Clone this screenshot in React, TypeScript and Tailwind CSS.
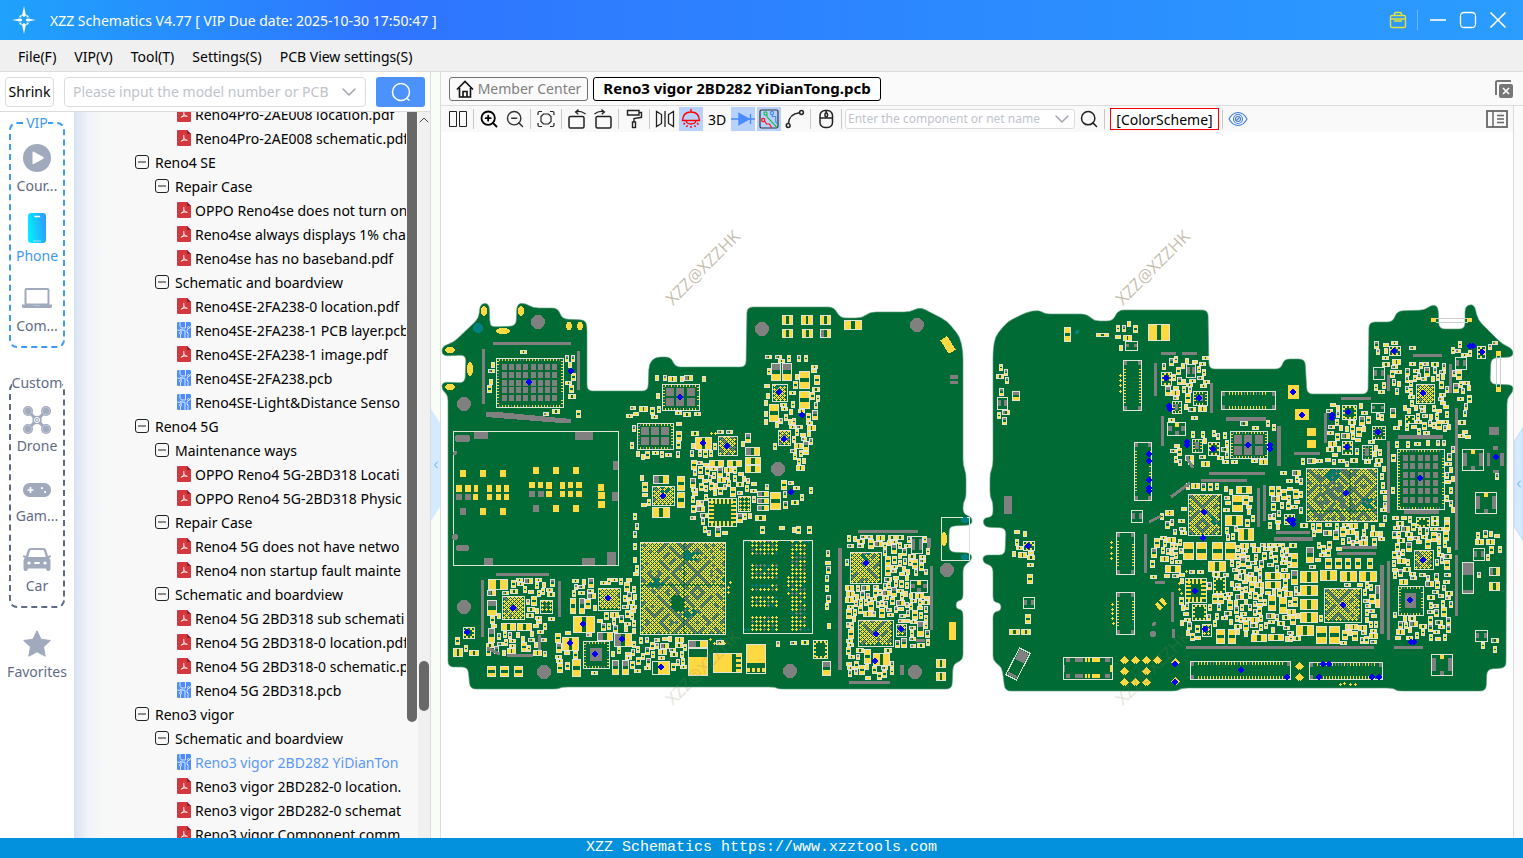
import React from "react";
import {
  ZoomIn,
  ZoomOut,
  Search,
  ChevronDown,
  ChevronUp,
  ChevronLeft,
} from "lucide-react";

/* ------------------------------------------------------------------ */
/* Board drawing                                                       */
/* ------------------------------------------------------------------ */

type Pt = [number, number];
type Box = [number, number, number, number];

function roundedPath(pts: Pt[], r: number): string {
  const n = pts.length;
  let d = "";
  for (let i = 0; i < n; i++) {
    const p0 = pts[(i + n - 1) % n];
    const p = pts[i];
    const p1 = pts[(i + 1) % n];
    const l0 = Math.hypot(p0[0] - p[0], p0[1] - p[1]);
    const l1 = Math.hypot(p1[0] - p[0], p1[1] - p[1]);
    const r0 = Math.min(r, l0 / 2);
    const r1 = Math.min(r, l1 / 2);
    const ax = p[0] + ((p0[0] - p[0]) * r0) / l0;
    const ay = p[1] + ((p0[1] - p[1]) * r0) / l0;
    const bx = p[0] + ((p1[0] - p[0]) * r1) / l1;
    const by = p[1] + ((p1[1] - p[1]) * r1) / l1;
    d += `${i === 0 ? "M" : "L"}${ax.toFixed(1)} ${ay.toFixed(1)}Q${p[0]} ${p[1]} ${bx.toFixed(1)} ${by.toFixed(1)}`;
  }
  return d + "Z";
}

const LEFT_OUTLINE: Pt[] = [
  [442, 346], [453, 343], [479, 318], [480, 304], [489, 303], [490, 325], [493, 327], [516, 326],
  [517, 304], [525, 303], [533, 308], [558, 308], [562, 319], [585, 320], [587, 326], [587, 391],
  [648, 391], [649, 364], [655, 357], [671, 357], [675, 367], [746, 367], [747, 307], [834, 307],
  [840, 318], [862, 318], [870, 312], [910, 312], [920, 307], [947, 321], [960, 337], [963, 353],
  [963, 465], [966, 473], [966, 498], [963, 503], [963, 514], [972, 517], [972, 525], [951, 526],
  [949, 530], [949, 552], [971, 553], [972, 560], [963, 566], [963, 600], [956, 601], [956, 609],
  [963, 610], [963, 660], [953, 664], [952, 689], [778, 689], [775, 687], [562, 687], [558, 689],
  [470, 689], [468, 667], [448, 667], [448, 395], [442, 390], [442, 382], [465, 383], [466, 355],
  [442, 356],
];

const RIGHT_OUTLINE: Pt[] = [
  [993, 352], [995, 337], [1007, 322], [1027, 312], [1039, 310], [1045, 314], [1087, 314],
  [1094, 321], [1113, 321], [1118, 310], [1208, 310], [1209, 369], [1281, 369], [1284, 359],
  [1305, 359], [1307, 394], [1368, 394], [1369, 322], [1393, 322], [1397, 311], [1425, 310],
  [1431, 305], [1438, 306], [1439, 329], [1465, 329], [1465, 306], [1474, 304], [1478, 320],
  [1502, 344], [1513, 349], [1513, 357], [1491, 358], [1490, 384], [1513, 385], [1513, 392],
  [1507, 398], [1506, 668], [1487, 669], [1486, 691], [1397, 691], [1393, 688], [1182, 688],
  [1177, 691], [1005, 691], [1002, 667], [993, 661], [993, 612], [1001, 611], [1001, 603],
  [993, 602], [993, 566], [983, 563], [983, 555], [1005, 555], [1006, 528], [984, 527],
  [983, 518], [993, 517], [993, 502], [990, 497], [990, 473], [993, 466],
];

const BARS: Box[] = [
  [493, 342, 78, 3], [482, 349, 3, 55], [577, 351, 3, 39], [496, 573, 53, 3], [481, 580, 3, 57],
  [558, 581, 3, 36], [507, 654, 26, 3], [538, 635, 3, 15], [858, 530, 60, 3], [927, 538, 4, 10],
  [930, 566, 3, 64], [838, 548, 4, 122], [849, 681, 41, 3], [916, 639, 9, 3], [900, 665, 4, 10],
  [950, 375, 8, 4], [950, 381, 8, 3], [1161, 352, 15, 3], [1182, 352, 15, 3], [1154, 363, 3, 33],
  [1210, 383, 3, 30], [1161, 416, 3, 30], [1226, 417, 40, 4], [1209, 472, 56, 3],
  [1201, 479, 46, 3], [1144, 534, 3, 39], [1171, 592, 3, 30], [1186, 646, 188, 3],
  [1257, 488, 3, 39], [1263, 485, 3, 36], [1277, 426, 4, 40], [1294, 452, 26, 3],
  [1324, 413, 3, 30], [1341, 397, 30, 3], [1387, 375, 3, 16], [1413, 354, 29, 3],
  [1449, 364, 3, 29], [1455, 408, 3, 142], [1455, 555, 3, 61], [1398, 435, 45, 4],
  [1387, 441, 3, 72], [1404, 510, 35, 4], [1342, 546, 35, 3], [1337, 552, 39, 3],
  [1276, 531, 34, 3], [1274, 537, 39, 4], [1380, 565, 4, 69], [1387, 561, 3, 79],
  [1394, 646, 29, 3], [1004, 496, 8, 18], [1155, 581, 10, 3], [1172, 629, 3, 9],
  [1489, 427, 10, 8], [1493, 446, 5, 4], [1487, 453, 3, 13], [1500, 453, 4, 13], [1493, 470, 6, 3],
  [474, 432, 14, 7], [575, 432, 18, 8], [613, 461, 5, 9], [612, 492, 6, 9], [484, 558, 9, 7],
  [582, 558, 13, 7], [607, 552, 9, 13], [456, 494, 6, 6], [465, 494, 6, 6], [460, 508, 6, 7],
  [529, 491, 6, 6], [538, 491, 6, 6], [533, 505, 6, 7],
];

const PADS: Box[] = [
  [460, 470, 6, 7], [480, 470, 6, 7], [500, 470, 6, 7], [533, 467, 6, 7], [553, 467, 6, 7],
  [573, 467, 6, 7], [456, 485, 6, 7], [465, 485, 6, 7], [474, 485, 4, 7], [487, 485, 5, 7],
  [496, 485, 5, 7], [504, 485, 5, 7], [473, 494, 5, 6], [487, 494, 5, 6], [496, 494, 5, 6],
  [504, 494, 5, 6], [529, 482, 6, 6], [538, 482, 5, 6], [546, 482, 6, 7], [560, 482, 5, 7],
  [568, 482, 5, 6], [576, 482, 6, 6], [546, 491, 6, 6], [560, 491, 5, 6], [568, 491, 5, 6],
  [576, 491, 6, 6], [480, 508, 6, 7], [500, 508, 6, 7], [553, 505, 6, 7], [573, 505, 6, 7],
  [598, 484, 6, 7], [598, 492, 7, 7], [598, 501, 7, 7], [949, 622, 7, 18], [1288, 385, 11, 14],
  [1295, 409, 14, 11], [1307, 428, 9, 8], [1307, 440, 9, 8],
];

/* x, y, w, h and G when the first pad is grey */
const PARTS: [number, number, number, number, string?][] = [
  [782, 315, 10, 9], [801, 315, 11, 9], [820, 315, 10, 9], [782, 329, 10, 8], [802, 329, 10, 8],
  [820, 329, 10, 8, "G"], [844, 320, 17, 9], [771, 363, 9, 17, "G"], [782, 363, 9, 17, "G"],
  [799, 371, 10, 17], [799, 391, 10, 17], [769, 404, 9, 17], [488, 579, 19, 10],
  [573, 616, 21, 16], [562, 637, 16, 13], [614, 633, 17, 13, "G"], [597, 632, 15, 8, "G"],
  [501, 623, 14, 7], [517, 623, 14, 7], [745, 447, 14, 8, "G"], [745, 457, 15, 7],
  [745, 465, 15, 7], [709, 460, 14, 6], [727, 460, 14, 6], [770, 492, 10, 17], [757, 491, 11, 5, "G"],
  [757, 498, 11, 5, "G"], [757, 505, 11, 5, "G"], [755, 515, 10, 5], [487, 666, 8, 10],
  [500, 666, 8, 10], [514, 666, 8, 10], [936, 659, 9, 8], [936, 672, 9, 8], [652, 507, 17, 10],
  [677, 476, 7, 14], [677, 492, 7, 15], [653, 475, 15, 8, "G"], [570, 598, 5, 15], [579, 598, 5, 15, "G"],
  [572, 659, 8, 17], [487, 600, 9, 15, "G"], [488, 628, 6, 14, "G"], [695, 437, 16, 12],
  [453, 648, 9, 8], [469, 650, 9, 5], [864, 649, 6, 14], [873, 653, 16, 12], [822, 661, 8, 14, "G"],
  [917, 621, 6, 15, "G"], [688, 640, 19, 8, "G"], [612, 660, 6, 14, "G"], [622, 660, 6, 14, "G"],
  [1148, 324, 21, 16], [1064, 327, 6, 14], [1096, 333, 12, 3], [1183, 542, 10, 17], [1196, 542, 10, 17],
  [1212, 542, 10, 17], [1225, 542, 10, 17], [1208, 561, 17, 10], [1165, 565, 15, 7],
  [1300, 571, 17, 11], [1300, 585, 17, 10], [1300, 599, 17, 10], [1300, 612, 17, 10],
  [1320, 570, 16, 10], [1340, 571, 16, 10], [1359, 571, 17, 10], [1296, 625, 17, 10],
  [1316, 626, 10, 17], [1329, 626, 10, 17], [1232, 495, 10, 16], [1225, 515, 17, 10], [1238, 528, 15, 12],
  [1236, 486, 15, 7], [1216, 629, 8, 14], [1228, 629, 7, 14], [1489, 567, 10, 8, "G"],
  [1489, 582, 10, 8], [1265, 572, 15, 7], [1265, 581, 15, 7], [1268, 595, 7, 15],
  [1279, 597, 7, 16], [1268, 634, 15, 6], [1251, 634, 15, 7], [1291, 553, 6, 14], [1291, 570, 6, 14, "G"],
  [1306, 547, 7, 15, "G"], [1325, 558, 6, 10], [1335, 558, 6, 10], [1345, 558, 5, 10],
  [1355, 558, 5, 10], [1367, 558, 5, 10], [1012, 391, 7, 9, "G"], [1009, 629, 10, 5], [1021, 629, 9, 5],
  [1269, 486, 5, 9], [1276, 486, 4, 9], [1281, 489, 5, 10], [1293, 489, 5, 9], [1375, 585, 4, 22, "G"],
];

/* BGA: x, y, w, h, dense, grey share */
const BGAS: [number, number, number, number, boolean, number][] = [
  [772, 384, 15, 17, true, 0.1], [718, 436, 19, 19, true, 0.4], [778, 430, 12, 15, true, 0.3],
  [652, 486, 22, 19, true, 0.2], [738, 496, 12, 15, false, 0.1], [640, 542, 85, 92, true, 0.36],
  [850, 552, 31, 31, true, 0.25], [858, 620, 35, 26, true, 0.2], [896, 624, 10, 12, true, 0.3],
  [502, 596, 22, 23, true, 0.2], [540, 600, 12, 13, false, 0.2], [598, 588, 22, 22, true, 0.2],
  [1306, 468, 71, 53, true, 0.55], [1188, 494, 33, 41, true, 0.35], [1324, 588, 37, 34, true, 0.4],
  [1414, 550, 19, 19, true, 0.3], [1416, 384, 18, 19, true, 0.3], [1202, 624, 9, 12, false, 0.2],
];

/* chips with thermal grid: x, y, w, h, cols, rows */
const GRIDS: [number, number, number, number, number, number][] = [
  [496, 358, 67, 49, 8, 5], [662, 384, 37, 26, 3, 2], [637, 423, 36, 26, 3, 2],
  [1230, 431, 37, 27, 3, 2], [1397, 449, 47, 60, 5, 6], [583, 641, 26, 27, 1, 1],
  [1398, 586, 25, 29, 1, 1], [1193, 391, 14, 14, 1, 1], [1372, 426, 13, 13, 1, 1],
  [1362, 445, 10, 14, 1, 1], [1192, 439, 10, 13, 1, 1], [1172, 401, 9, 12, 1, 1],
];

const QFNS: Box[] = [
  [708, 498, 28, 28], [463, 627, 11, 11], [813, 640, 14, 18], [1185, 578, 21, 24],
  [1161, 372, 10, 13], [1208, 442, 11, 13], [1342, 405, 14, 14], [1342, 441, 10, 13],
  [1213, 577, 12, 16], [1192, 604, 14, 16], [1389, 346, 11, 9], [1477, 346, 8, 12],
  [1023, 541, 11, 9], [1284, 514, 10, 10], [1405, 415, 9, 8], [1416, 517, 13, 10],
];

const CONNECTORS: [number, number, number, number, boolean][] = [
  [1123, 360, 18, 50, true], [1134, 442, 17, 58, true], [1116, 532, 18, 42, true],
  [1116, 592, 18, 42, true], [1221, 391, 54, 18, false], [1190, 661, 100, 18, false],
  [1309, 662, 73, 17, false],
];

const CORNER_BOXES: Box[] = [
  [1462, 449, 21, 21], [1475, 492, 21, 21], [1431, 654, 21, 21], [1131, 510, 11, 12],
  [1023, 597, 11, 11], [997, 397, 10, 12], [1125, 341, 12, 9], [1167, 422, 18, 13],
  [1373, 367, 11, 12], [1455, 357, 11, 12], [1473, 548, 11, 12], [1475, 630, 12, 11],
  [1371, 403, 13, 9], [1186, 364, 9, 13], [910, 580, 17, 12], [911, 536, 11, 17],
];

/* dense areas of small passives: x, y, w, h, density */
const CLUSTERS: [number, number, number, number, number][] = [
  [764, 355, 48, 8, 0.9], [764, 364, 55, 60, 0.45], [773, 422, 42, 30, 0.6], [793, 446, 16, 27, 0.5],
  [487, 360, 8, 35, 0.7], [565, 354, 10, 48, 0.5], [498, 350, 66, 4, 0.3], [540, 409, 40, 8, 0.2],
  [655, 375, 52, 7, 0.8], [625, 406, 78, 12, 0.5], [630, 425, 5, 32, 0.8], [634, 451, 46, 8, 0.7],
  [676, 420, 5, 32, 0.7], [655, 383, 5, 27, 0.8], [690, 430, 60, 28, 0.6], [690, 460, 60, 36, 0.8],
  [700, 490, 12, 45, 0.8], [736, 482, 22, 40, 0.6], [690, 496, 16, 24, 0.9], [640, 475, 12, 35, 0.6],
  [757, 480, 55, 30, 0.15], [700, 526, 30, 12, 0.7], [756, 526, 55, 7, 0.4], [486, 578, 60, 78, 0.7],
  [546, 578, 10, 42, 0.6], [570, 578, 66, 62, 0.8], [553, 630, 82, 44, 0.4], [628, 637, 60, 38, 0.5],
  [825, 548, 5, 86, 1], [633, 513, 5, 90, 1], [845, 535, 84, 112, 1], [845, 647, 50, 32, 0.6],
  [640, 636, 45, 12, 0.4], [707, 640, 60, 5, 0.3], [773, 640, 38, 7, 0.3], [453, 625, 24, 34, 0.2],
  [1161, 356, 48, 32, 0.5], [1165, 380, 45, 34, 0.6], [1166, 416, 32, 8, 0.7], [1170, 430, 68, 36, 0.4],
  [996, 358, 14, 66, 0.4], [1012, 525, 14, 32, 0.5], [1026, 550, 8, 40, 0.4], [1024, 610, 6, 18, 0.5],
  [1113, 320, 26, 32, 0.3], [1150, 536, 34, 42, 0.5], [1178, 500, 8, 130, 0.5], [1160, 510, 24, 30, 0.3],
  [1222, 485, 32, 55, 0.7], [1182, 570, 50, 70, 0.6], [1230, 543, 70, 98, 0.9], [1280, 470, 22, 50, 0.4],
  [1268, 486, 34, 46, 0.5], [1296, 458, 88, 8, 0.7], [1303, 541, 34, 28, 0.5], [1300, 523, 84, 22, 0.7],
  [1320, 546, 60, 10, 0.4], [1340, 582, 38, 62, 0.8], [1318, 584, 62, 60, 0.7], [1326, 403, 60, 58, 0.5],
  [1373, 340, 30, 55, 0.35], [1403, 346, 14, 6, 0.6], [1405, 362, 43, 75, 0.75], [1390, 405, 60, 26, 0.3],
  [1395, 440, 55, 9, 0.9], [1445, 446, 9, 70, 0.8], [1380, 464, 6, 62, 1], [1390, 445, 5, 48, 0.5],
  [1392, 516, 60, 60, 0.7], [1392, 572, 60, 70, 0.55], [1450, 340, 14, 55, 0.4], [1458, 340, 40, 20, 0.35],
  [1457, 378, 14, 74, 0.35], [1475, 530, 26, 30, 0.3], [1477, 565, 6, 28, 0.6], [1480, 630, 18, 24, 0.4],
  [1235, 420, 40, 10, 0.6], [1230, 458, 40, 8, 0.5], [1490, 453, 10, 35, 0.3], [1181, 483, 70, 8, 0.6],
];

const BLUE: Pt[] = [
  [529, 382], [571, 371], [680, 397], [779, 392], [802, 415], [784, 439], [727, 446], [703, 443],
  [663, 496], [791, 492], [467, 632], [513, 608], [608, 598], [583, 624], [570, 643], [622, 639],
  [595, 654], [661, 667], [866, 563], [876, 634], [901, 629], [875, 661], [1166, 378], [1199, 398],
  [1169, 406], [1170, 409], [1187, 442], [1187, 445], [1213, 449], [1149, 454], [1149, 461],
  [1149, 480], [1149, 488], [1149, 491], [1248, 445], [1270, 445], [1270, 449], [1204, 512],
  [1203, 538], [1195, 591], [1205, 629], [1028, 546], [1241, 670], [1175, 664], [1175, 682],
  [1293, 392], [1302, 415], [1332, 415], [1332, 418], [1348, 412], [1378, 432], [1347, 447],
  [1346, 493], [1289, 520], [1293, 520], [1293, 524], [1423, 393], [1394, 351], [1420, 478],
  [1423, 560], [1410, 600], [1343, 605], [1482, 352], [1470, 346], [1473, 346], [1496, 457],
  [1411, 642], [1414, 642], [1319, 677], [1372, 677], [1379, 677], [1287, 677], [1323, 664],
  [1329, 664],
];

const HOLES: Pt[] = [
  [538, 322], [464, 404], [762, 329], [917, 325], [778, 469], [464, 607], [544, 672], [790, 671],
  [915, 672], [947, 570],
];

const STARS: Pt[] = [
  [1124, 660], [1135, 660], [1146, 660], [1157, 660], [1124, 671], [1146, 671], [1124, 682],
  [1135, 682], [1146, 682], [1175, 662], [1175, 681], [1299, 666], [1299, 677],
];

const OVALS: [number, number, number, number][] = [
  [484, 311, 3, 5], [521, 311, 3, 5], [503, 331, 7, 3], [569, 326, 3, 4], [580, 326, 3, 4],
  [450, 350, 5, 3], [470, 369, 3, 7], [450, 387, 5, 3], [944, 539, 3, 7],
];

function buildBoard() {
  let seed = 20282;
  const rnd = () => {
    seed = (seed * 1664525 + 1013904223) % 4294967296;
    return seed / 4294967296;
  };
  const X0 = 440;
  const Y0 = 290;
  const W = 1080;
  const H = 410;
  const used = new Uint8Array(W * H);
  const mark = (x: number, y: number, w: number, h: number) => {
    for (let j = y; j < y + h; j++)
      for (let i = x; i < x + w; i++) used[(j - Y0) * W + (i - X0)] = 1;
  };
  const free = (x: number, y: number, w: number, h: number) => {
    for (let j = y; j < y + h; j++)
      for (let i = x; i < x + w; i++) if (used[(j - Y0) * W + (i - X0)]) return false;
    return true;
  };
  const out = { y: "", g: "", t: "", line: "" };
  const rect = (k: "y" | "g" | "t", x: number, y: number, w: number, h: number) => {
    out[k] += `M${x} ${y}h${w}v${h}h${-w}z`;
  };
  const frame = (x: number, y: number, w: number, h: number) => {
    out.line += `M${x + 0.5} ${y + 0.5}h${w}v${h}h${-w}z`;
  };
  const part = (x: number, y: number, w: number, h: number, first: "y" | "g", second: "y" | "g") => {
    frame(x, y, w, h);
    if (w >= h) {
      const p = Math.max(1, Math.round((w - 1) * 0.38));
      rect(first, x + 1, y + 1, p, h - 1);
      rect(second, x + w - p, y + 1, p, h - 1);
    } else {
      const p = Math.max(1, Math.round((h - 1) * 0.38));
      rect(first, x + 1, y + 1, w - 1, p);
      rect(second, x + 1, y + h - p, w - 1, p);
    }
  };
  const plus = (k: "y" | "g" | "t", x: number, y: number) => {
    out[k] += `M${x} ${y + 1}h3v1h-3zM${x + 1} ${y}h1v3h-1z`;
  };

  BARS.forEach(([x, y, w, h]) => {
    rect("g", x, y, w, h);
    mark(x, y, w, h);
  });
  PADS.forEach(([x, y, w, h]) => {
    rect("y", x, y, w, h);
    mark(x, y, w, h);
  });
  BLUE.forEach(([x, y]) => mark(x - 2, y - 2, 4, 4));
  HOLES.forEach(([x, y]) => mark(x - 7, y - 7, 14, 14));

  frame(453, 431, 165, 134);
  mark(453, 431, 166, 135);

  /* power inductors and shields */
  [[688, 647, 19, 28], [746, 644, 19, 29], [713, 653, 28, 20], [652, 661, 17, 13]].forEach(
    ([x, y, w, h]) => mark(x, y, w, h),
  );
  frame(688, 647, 19, 28);
  rect("y", 689, 657, 18, 18);
  frame(746, 644, 19, 29);
  rect("y", 747, 645, 18, 18);
  [0, 5, 10, 15].forEach((o) => rect("y", 747 + o, 668, 3, 4));
  rect("y", 713, 654, 19, 19);
  frame(713, 653, 28, 19);
  [0, 5, 10, 15].forEach((o) => rect("y", 736, 654 + o, 5, 3));
  rect("y", 658, 661, 11, 13);
  frame(652, 661, 17, 13);

  GRIDS.forEach(([x, y, w, h, c, r]) => {
    mark(x - 1, y - 1, w + 2, h + 2);
    frame(x, y, w, h);
    const m = c === 1 ? Math.floor(w / 4) : w > 40 ? 5 : 3;
    const cw = (w - 2 * m) / c;
    const ch = (h - 2 * m) / r;
    for (let i = 0; i < c; i++)
      for (let j = 0; j < r; j++)
        rect("g", Math.round(x + m + i * cw) + 1, Math.round(y + m + j * ch) + 1,
          Math.max(3, Math.round(cw) - 2), Math.max(3, Math.round(ch) - 2));
    for (let i = 3; i < w - 2; i += 3) {
      rect(rnd() < 0.7 ? "y" : "g", x + i, y + 1, 1, 2);
      rect(rnd() < 0.7 ? "y" : "g", x + i, y + h - 2, 1, 2);
    }
    for (let j = 3; j < h - 2; j += 3) {
      rect(rnd() < 0.7 ? "y" : "g", x + 1, y + j, 2, 1);
      rect(rnd() < 0.8 ? "y" : "t", x + w - 2, y + j, 2, 1);
    }
  });

  QFNS.forEach(([x, y, w, h]) => {
    mark(x, y, w + 1, h + 1);
    frame(x, y, w, h);
    const p = w > 20 ? 5 : 2;
    for (let i = 3; i < w - 2; i += 4) {
      rect("y", x + i, y + 1, 2, p);
      rect("y", x + i, y + h - p, 2, p);
    }
    for (let j = 3; j < h - 2; j += 4) {
      rect("y", x + 1, y + j, p, 2);
      rect("y", x + w - p, y + j, p, 2);
    }
  });

  CONNECTORS.forEach(([x, y, w, h, vertical]) => {
    mark(x, y, w + 1, h + 1);
    frame(x, y, w, h);
    [[x + 1, y + 1], [x + w - 3, y + 1], [x + 1, y + h - 4], [x + w - 3, y + h - 4]].forEach(
      ([a, b]) => rect("g", a, b, 3, 4),
    );
    if (vertical) {
      for (let j = 9; j < h - 7; j += 3) {
        rect("y", x + 1, y + j, 2, 1);
        rect(rnd() < 0.8 ? "y" : "t", x + w - 2, y + j, 2, 1);
      }
    } else {
      for (let i = 8; i < w - 7; i += 3) {
        rect(rnd() < 0.7 ? "y" : "g", x + i, y + 1, 1, 3);
        rect("y", x + i, y + h - 3, 1, 3);
      }
    }
  });

  CORNER_BOXES.forEach(([x, y, w, h]) => {
    mark(x, y, w + 1, h + 1);
    frame(x, y, w, h);
    const s = w > 15 ? 4 : 3;
    if (w > 15) {
      rect("g", x + 1, y + 4, 4, h - 8);
      rect("g", x + w - 4, y + 4, 4, h - 8);
      rect("y", x + Math.floor(w / 2) - 1, y + 1, 4, 4);
      rect("g", x + Math.floor(w / 2) - 1, y + h - 4, 4, 4);
    } else {
      rect("g", x + 1, y + 3, s, h - 6);
      rect("g", x + w - s, y + 3, s, h - 6);
    }
  });
  frame(1462, 562, 11, 31);
  rect("g", 1462, 563, 11, 12);
  rect("g", 1463, 590, 10, 3);
  mark(1461, 561, 14, 34);
  frame(1063, 657, 49, 22);
  mark(1063, 657, 50, 23);
  [[1066, 658, 4, 4, 0], [1075, 658, 8, 4, 0], [1085, 658, 2, 4, 1], [1088, 658, 2, 4, 1],
    [1092, 658, 8, 4, 1], [1105, 658, 5, 4, 0], [1066, 674, 4, 4, 0], [1075, 674, 8, 4, 0],
    [1085, 674, 2, 4, 1], [1088, 674, 2, 4, 1], [1092, 674, 8, 4, 1], [1105, 674, 5, 4, 0],
    [1063, 665, 2, 7, 0], [1110, 665, 2, 7, 1]].forEach(([x, y, w, h, k]) =>
    rect(k ? "y" : "g", x, y, w, h));

  PARTS.forEach(([x, y, w, h, k]) => {
    mark(x, y, w + 1, h + 1);
    part(x, y, w, h, k ? "g" : "y", "y");
  });

  BGAS.forEach(([x, y, w, h, dense, grey], n) => {
    mark(x - 1, y - 1, w + 3, h + 3);
    frame(x, y, w, h);
    const big = w > 60;
    const step = dense ? 2 : 4;
    let row = 0;
    for (let j = 0; j + 3 <= h; j += step, row++)
      for (let i = dense && row % 2 ? 3 : 1; i + 3 <= w; i += 4) {
        if (w > 80 && Math.hypot(i - 36, (j - 59) * 0.8) < 7) continue;
        const band = Math.floor(i / 14) + Math.floor(j / 16);
        const stripe = band % 2 ? (i + j) % 12 < 5 : (i - j + 96) % 12 < 5;
        const v = (stripe ? 0.45 : -0.1) + Math.sin(i * 0.07 + n) * 0.2 + rnd() * 0.5;
        const teal = Math.sin(i * 0.09 + n * 3 + 1) * Math.cos(j * 0.11 + n);
        const k =
          (big ? teal > 0.8 : teal > 0.9) && rnd() < 0.7
            ? "t"
            : v > 0.95 - grey * (big ? 1.1 : 0.9)
              ? "g"
              : "y";
        plus(k, x + Math.round(i * 1.012), y + Math.round(j * 1.012));
      }
  });

  /* memory footprint with separate ball fields */
  frame(743, 540, 69, 93);
  mark(743, 540, 71, 95);
  for (let j = 0; j < 23; j++)
    for (let i = 0; i < 17; i++) {
      const left = i >= 2 && i <= 8;
      const right = i >= 12 && i <= 15;
      const gapRow = (j >= 4 && j <= 5) || j === 10 || j === 13 || (j >= 17 && j <= 18);
      const corner = (i < 2 || i > 14) && (j < 1 || j > 21);
      if ((left && !gapRow) || right || (i === 11 && j > 8 && j < 14) || corner) {
        const k = corner || (j === 11 && i < 7) ? "t" : rnd() < 0.22 ? "g" : rnd() < 0.1 ? "t" : "y";
        plus(k, 743 + i * 4, 540 + j * 4);
      }
    }

  /* loose test points */
  [[1119, 374], [1119, 379], [1119, 384], [1119, 390], [1110, 541], [1110, 546], [1110, 552],
    [1110, 557], [1111, 603], [1111, 608], [1111, 612], [1111, 617], [1112, 622], [709, 638],
    [713, 642], [718, 642], [723, 642], [705, 642], [729, 581], [727, 586], [727, 591],
    [1339, 683], [1343, 682], [1349, 683], [1354, 683], [1169, 512], [1178, 582], [1178, 588],
    [1180, 592], [1185, 570], [710, 432], [714, 432], [709, 488], [714, 488]].forEach(([x, y]) =>
    plus("y", x, y));
  plus("t", 719, 638);

  const sizes: Pt[] = [
    [6, 3], [3, 6], [5, 3], [3, 5], [7, 4], [4, 7], [8, 5], [5, 9], [6, 3], [3, 6],
  ];
  CLUSTERS.forEach(([cx, cy, cw, ch, density]) => {
    for (let y = cy; y < cy + ch; y++)
      for (let x = cx; x < cx + cw; x++) {
        if (rnd() > 0.09 * density + 0.14 * density * density) continue;
        const [w, h] = sizes[Math.floor(rnd() * sizes.length)];
        if (x + w > cx + cw || y + h > cy + ch || !free(x, y, w + 1, h + 1)) continue;
        mark(x, y, w + 1, h + 1);
        part(x, y, w, h, rnd() < 0.3 ? "g" : "y", "y");
      }
  });
  return out;
}

const BOARD = buildBoard();
const LEFT_PATH = roundedPath(LEFT_OUTLINE, 6);
const RIGHT_PATH = roundedPath(RIGHT_OUTLINE, 6);

function Watermark({ x, y }: { x: number; y: number }) {
  return (
    <text
      transform={`translate(${x} ${y}) rotate(-45)`}
      fontSize="17"
      fill="#8a7d5a"
      fillOpacity="0.5"
      fontFamily="'Open Sans', sans-serif"
    >
      XZZ@XZZHK
    </text>
  );
}

function BoardView() {
  return (
    <svg
      viewBox="441 132 1072 706"
      className="block h-full w-full"
      role="img"
      aria-label="Board view"
    >
      <g fill="#006b35" stroke="#5d9c7c" strokeWidth="0.6">
        <path d={LEFT_PATH} />
        <path d={RIGHT_PATH} />
      </g>
      <g shapeRendering="crispEdges">
        <path d={BOARD.g} fill="#808080" />
        <path d={BOARD.y} fill="#ffd942" />
        <path d={BOARD.t} fill="#008080" />
        <path d={BOARD.line} fill="none" stroke="#dfe3d8" strokeWidth="1" />
        <path d="M486 412l12 0 73 7v4l-10 0-63-5-12-1z" fill="#808080" />
        <path d="M1171 497l19-14M1149 522l12-6M1187 458l6 10M487 648l13 6" stroke="#808080" strokeWidth="3" />
        <rect x="-4" y="-8" width="8" height="16" transform="translate(948 345) rotate(-32)" fill="#ffd942" />
        <g transform="translate(1018 664) rotate(27)">
          <rect x="-6" y="-15" width="12" height="30" fill="none" stroke="#dfe3d8" />
          <rect x="-5" y="-14" width="10" height="11" fill="#808080" />
          <rect x="-5" y="11" width="10" height="3" fill="#808080" />
        </g>
        <g transform="translate(1161 604) rotate(-42)">
          <rect x="-5" y="-4" width="4" height="8" fill="#ffd942" />
          <rect x="1" y="-4" width="4" height="8" fill="#ffd942" />
        </g>
        <path d="M941.500 517.500h28v43h-28z" fill="none" stroke="#dfe3d8" />
        <path d="M1436 318.500h32M1436 322.500h32M1496.500 356v34M1500.500 356v34" stroke="#cfcfcf" />
        <path d="M1431 318h5v4h-5zM1467 318h5v4h-5zM1496 351h5v5h-5zM1496 387h5v5h-5z" fill="#ffd942" />
        {HOLES.map(([x, y]) => (
          <circle key={`${x}-${y}`} cx={x} cy={y} r="7" fill="#808080" />
        ))}
        <circle cx="1153" cy="634" r="3" fill="#808080" />
        <circle cx="1154" cy="624" r="2" fill="#808080" />
        <rect x="455" y="435" width="15" height="7" rx="3" fill="#808080" />
        <rect x="456" y="545" width="13" height="6" rx="3" fill="#808080" />
        <circle cx="455" cy="453" r="2" fill="#808080" />
        <circle cx="455" cy="537" r="3" fill="#808080" />
        <circle cx="478" cy="328" r="5" fill="#008080" />
        <circle cx="1077" cy="332" r="2" fill="#008080" />
        <ellipse cx="965" cy="520" rx="4" ry="3" fill="#008080" />
        <ellipse cx="965" cy="557" rx="4" ry="3" fill="#008080" />
        {OVALS.map(([x, y, rx, ry]) => (
          <ellipse key={`${x}-${y}`} cx={x} cy={y} rx={rx} ry={ry} fill="#ffd942" />
        ))}
        {STARS.map(([x, y]) => (
          <path
            key={`${x}-${y}`}
            d={`M${x - 4} ${y}h1v-1h1v-1h1v-1h1v-1h1v1h1v1h1v1h1v1h1v1h-1v1h-1v1h-1v1h-1v-1h-1v1h-1v-1h-1v-1h-1v-1h-1z`}
            fill="#ffd942"
          />
        ))}
        {BLUE.map(([x, y]) => (
          <circle key={`${x}-${y}`} cx={x} cy={y} r="2.600" fill="#0000f5" />
        ))}
      </g>
      <Watermark x={673} y={306} />
      <Watermark x={1123} y={306} />
      <g opacity="0.5">
        <Watermark x={673} y={706} />
        <Watermark x={1123} y={706} />
      </g>
    </svg>
  );
}

/* ------------------------------------------------------------------ */
/* Icons                                                               */
/* ------------------------------------------------------------------ */

function Logo() {
  return (
    <svg viewBox="0 0 24 28" className="h-7 w-6" fill="#fff" aria-hidden="true">
      <path d="M12 0l1.900 9.500L12 11l-1.900-1.500zM12 28l1.900-9.500L12 17l-1.900 1.500zM0 14l9-1.600L10.500 14 9 15.600zM24 14l-9-1.600L13.500 14l1.500 1.600z" />
      <path d="M7 10l3-1-1 3zM17 10l-3-1 1 3zM7 18l3 1-1-3zM17 18l-3 1 1-3z" opacity=".85" />
      <circle cx="12" cy="14" r="5.500" fill="none" stroke="#fff" strokeWidth=".7" opacity=".6" />
    </svg>
  );
}

function PdfIcon() {
  return (
    <svg viewBox="0 0 14 16" className="h-4 w-[14px] shrink-0" aria-hidden="true">
      <path d="M1.200 0H10l4 4v10.800a1.200 1.200 0 0 1-1.200 1.200H1.200A1.200 1.200 0 0 1 0 14.800V1.200A1.200 1.200 0 0 1 1.200 0z" fill="#d4373e" />
      <path d="M10 0l4 4h-3.200a.8.8 0 0 1-.8-.8z" fill="#8f1a20" />
      <path d="M6.800 5.200v2.600M6.900 7.800c0 1.500-1.200 3-2.600 3.500M7 8.300c.4 1.200 1.600 1.900 3.300 2M5 10.600c1.200-.5 2.700-.8 4-.7" fill="none" stroke="#fff" strokeWidth=".9" strokeLinecap="round" />
    </svg>
  );
}

function PcbIcon() {
  return (
    <svg viewBox="0 0 14 16" className="h-4 w-[14px] shrink-0" aria-hidden="true">
      <rect width="14" height="16" rx="1.200" fill="#4c8dfb" />
      <g fill="none" stroke="#fff" strokeWidth=".8">
        <path d="M3 0v4.500l2 1.500h3.500V0M2.800 8.200L.5 8.200M5.300 8.200h2.700v7.800M3.500 12.200V16M11 16v-5.500h-1V8l1.200-1.500M12.300 5.500L14 4.500" />
        <circle cx="4.100" cy="8.200" r="1.100" />
        <circle cx="11.600" cy="5.600" r="1" />
        <circle cx="3.500" cy="11.200" r="1" />
      </g>
    </svg>
  );
}

function BoxMinus() {
  return (
    <svg viewBox="0 0 14 14" className="h-[14px] w-[14px] shrink-0" fill="none" stroke="#222" aria-hidden="true">
      <rect x=".5" y=".5" width="13" height="13" rx="2.500" />
      <path d="M3 7h8" />
    </svg>
  );
}

const GREY = "#a1a9bd";

function CourseIcon() {
  return (
    <svg viewBox="0 0 28 28" className="h-7 w-7" aria-hidden="true">
      <circle cx="14" cy="14" r="14" fill={GREY} />
      <path d="M9.500 8.500q0-1.400 1.300-.8l9.500 5.400q1.100.9 0 1.700l-9.500 5.300q-1.300.5-1.300-.9z" fill="#fff" />
    </svg>
  );
}
function PhoneIcon() {
  return (
    <svg viewBox="0 0 18 30" className="h-[30px] w-[18px]" aria-hidden="true">
      <defs>
        <linearGradient id="phone" x1="0" y1="0.600" x2="1" y2="0.400">
          <stop offset="0" stopColor="#00f0ff" />
          <stop offset="1" stopColor="#2e9bff" />
        </linearGradient>
      </defs>
      <rect width="18" height="30" rx="3" fill="url(#phone)" />
      <path d="M7 3.500h4.500" stroke="#fff" strokeWidth="1.500" strokeLinecap="round" />
      <path d="M5 28h8" stroke="#9fe4ff" strokeWidth="1" />
    </svg>
  );
}
function LaptopIcon() {
  return (
    <svg viewBox="0 0 30 20" className="h-5 w-[30px]" aria-hidden="true">
      <rect x="3.500" y="1" width="23" height="15.500" rx="1" fill="none" stroke={GREY} strokeWidth="2" />
      <path d="M0 16.500h11q0 1 1 1h6q1 0 1-1h11v2q0 1.500-2 1.500H2q-2 0-2-1.500z" fill={GREY} />
    </svg>
  );
}
function DroneIcon() {
  return (
    <svg viewBox="0 0 28 28" className="h-7 w-7" aria-hidden="true">
      <path d="M5 5l6 6q3 1 6 0l6-6M5 23l6-6q3-1 6 0l6 6" stroke={GREY} strokeWidth="3" fill="none" />
      {[[5, 5], [23, 5], [5, 23], [23, 23]].map(([x, y]) => (
        <g key={`${x}-${y}`}>
          <circle cx={x} cy={y} r="5" fill={GREY} />
          <circle cx={x} cy={y} r="3.700" fill="none" stroke="#c9cedb" strokeWidth=".7" />
        </g>
      ))}
      <rect x="9.500" y="10" width="9" height="8" rx="2" fill={GREY} />
      <circle cx="14" cy="14" r="2.600" fill="none" stroke="#fff" />
      <circle cx="14" cy="14" r="1" fill="#fff" />
    </svg>
  );
}
function GameIcon() {
  return (
    <svg viewBox="0 0 28 14" className="h-[14px] w-7" aria-hidden="true">
      <rect width="28" height="14" rx="6.500" fill={GREY} />
      <path d="M4.500 7h6M7.500 4v6" stroke="#fff" strokeWidth="1.600" />
      <circle cx="19" cy="5.200" r="1.100" fill="#fff" />
      <circle cx="22" cy="9" r="1.100" fill="#fff" />
    </svg>
  );
}
function CarIcon() {
  return (
    <svg viewBox="0 0 28 24" className="h-6 w-7" aria-hidden="true">
      <path d="M8 0h12q2.500 0 3.300 2.300L25 8l2.500-1 .5 2-2 1q1.500 1 1.500 3v7.500q0 2.500-2.200 2.500t-2.300-2.500H5q0 2.500-2.300 2.500T.5 20.500V13q0-2 1.500-3L0 9l.5-2L3 8l1.700-5.700Q5.500 0 8 0z" fill={GREY} />
      <path d="M8.200 2h11.600q1 0 1.300.9L22.800 9H5.200l1.700-6.100Q7.200 2 8.200 2z" fill="#fff" />
      <rect x="11" y="14" width="6" height="2" rx="1" fill="#fff" />
      <circle cx="6" cy="15" r="1.600" fill="#fff" />
      <circle cx="22" cy="15" r="1.600" fill="#fff" />
    </svg>
  );
}
function StarIcon() {
  return (
    <svg viewBox="0 0 28 28" className="h-7 w-7" aria-hidden="true">
      <path d="M14 .8l4 8.400 9.300 1.300-6.800 6.400 1.700 9.300L14 21.800l-8.200 4.400 1.700-9.300L.7 10.500 10 9.200z" fill={GREY} stroke={GREY} strokeWidth="1" strokeLinejoin="round" />
    </svg>
  );
}

const svgProps = {
  viewBox: "0 0 20 20",
  className: "h-5 w-5",
  fill: "none",
  stroke: "#222",
  strokeWidth: 1.4,
  "aria-hidden": true,
} as const;

const SplitIcon = () => (
  <svg {...svgProps} strokeWidth={1}>
    <path d="M1.500 2.500h7v15h-7zM11.500 2.500h7v15h-7z" />
  </svg>
);
const FitIcon = () => (
  <svg {...svgProps} strokeWidth={1.200}>
    <path d="M2 6V4q0-1.500 1.500-1.500H6M14 2.500h2.500Q18 2.500 18 4v2M18 14v2q0 1.500-1.500 1.500H14M6 17.500H3.500Q2 17.500 2 16v-2" />
    <path d="M7.500 5h5L15 7.500v5L12.500 15h-5L5 12.500v-5z" />
  </svg>
);
const RotateIcon = ({ flip }: { flip?: boolean }) => (
  <svg {...svgProps} strokeWidth={1.500}>
    <g transform={flip ? "translate(20 0) scale(-1 1)" : undefined}>
      <rect x="2" y="7.500" width="15" height="11.500" rx="1.500" />
      <path d="M18.500 5Q14 1.500 9 2.800M11.500.6L8.600 2.900l2.700 2.300" strokeWidth="1.300" />
    </g>
  </svg>
);
const RollerIcon = () => (
  <svg {...svgProps}>
    <path d="M3.500 1.500h11.500v4.500H3.500zM15 3.500h2.500v4.800L10 9.500v3.500" />
    <rect x="8.500" y="13" width="3" height="5.500" />
  </svg>
);
const FlipIcon = () => (
  <svg {...svgProps} strokeWidth={1.300}>
    <path d="M1.500 2.500v15l5-3v-9zM18.500 2.500v15l-5-3v-9zM10 2v16" />
  </svg>
);
const LampIcon = () => (
  <svg {...svgProps} stroke="#ff0000">
    <path d="M10 0v3M1.500 11.500Q2 3 10 3t8.500 8.500zM5 11.500q.5 3.500 5 3.500t5-3.500M2.500 15.500L4 14M17.500 15.500L16 14M5.500 18l1-1.700M14.500 18l-1-1.700M10 19v-2" />
  </svg>
);
const DiodeIcon = () => (
  <svg {...svgProps} stroke="#4a8cff" viewBox="0 0 24 20" className="h-5 w-6">
    <path d="M0 10h24M19.500 5v10" />
    <path d="M8 4.500L18 10 8 15.500z" fill="#4a8cff" />
  </svg>
);
const NetIcon = () => (
  <svg {...svgProps} strokeWidth={1.200}>
    <rect x="1" y="1" width="18" height="18" rx="1.500" stroke="#333" />
    <path d="M7.200 5.500l1.300 3L18 18.500" stroke="#1cc04b" />
    <circle cx="6.500" cy="4.500" r="1.600" stroke="#1cc04b" />
    <circle cx="13" cy="4" r="1.600" stroke="#4a8cff" />
    <path d="M13.200 5.700v1.800h3.500v5.500l1.500 1.500" stroke="#4a8cff" />
    <circle cx="4.200" cy="11" r="1.600" stroke="#ff1010" />
    <path d="M5.500 12l2 3h3l2 3.500" stroke="#ff1010" />
  </svg>
);
const ArcIcon = () => (
  <svg {...svgProps} strokeWidth={1.500}>
    <circle cx="3.200" cy="16.500" r="1.900" />
    <circle cx="16.500" cy="3.500" r="1.900" />
    <path d="M3.500 14.500Q4 5 14.500 3.800" />
  </svg>
);
const MouseIcon = () => (
  <svg {...svgProps} strokeWidth={1.500}>
    <rect x="4" y="1.500" width="12.500" height="17" rx="5" />
    <path d="M4 9h12.500M10.200 1.500v3" />
    <rect x="9" y="4" width="2.500" height="4" rx="1.200" />
  </svg>
);
const EyeIcon = () => (
  <svg {...svgProps} stroke="#3c78d8" strokeWidth={1.100}>
    <path d="M1 10Q4.500 3.500 10 3.500T19 10q-3.500 6.500-9 6.500T1 10z" />
    <circle cx="10" cy="10" r="4.500" />
    <circle cx="10" cy="10" r="2.500" />
    <path d="M8.500 11.500l3-3" />
  </svg>
);

/* ------------------------------------------------------------------ */
/* Tree                                                                */
/* ------------------------------------------------------------------ */

type Row = { d: 0 | 1; t: string } | { d: 2; t: string; k: "pdf" | "pcb"; on?: boolean };

const ROWS: Row[] = [
  { d: 2, k: "pdf", t: "Reno4Pro-2AE008 location.pdf" },
  { d: 2, k: "pdf", t: "Reno4Pro-2AE008 schematic.pdf" },
  { d: 0, t: "Reno4 SE" },
  { d: 1, t: "Repair Case" },
  { d: 2, k: "pdf", t: "OPPO Reno4se does not turn on" },
  { d: 2, k: "pdf", t: "Reno4se always displays 1% cha" },
  { d: 2, k: "pdf", t: "Reno4se has no baseband.pdf" },
  { d: 1, t: "Schematic and boardview" },
  { d: 2, k: "pdf", t: "Reno4SE-2FA238-0 location.pdf" },
  { d: 2, k: "pcb", t: "Reno4SE-2FA238-1 PCB layer.pcb" },
  { d: 2, k: "pdf", t: "Reno4SE-2FA238-1 image.pdf" },
  { d: 2, k: "pcb", t: "Reno4SE-2FA238.pcb" },
  { d: 2, k: "pcb", t: "Reno4SE-Light&Distance Senso" },
  { d: 0, t: "Reno4 5G" },
  { d: 1, t: "Maintenance ways" },
  { d: 2, k: "pdf", t: "OPPO Reno4 5G-2BD318 Locati" },
  { d: 2, k: "pdf", t: "OPPO Reno4 5G-2BD318 Physic" },
  { d: 1, t: "Repair Case" },
  { d: 2, k: "pdf", t: "Reno4 5G does not have netwo" },
  { d: 2, k: "pdf", t: "Reno4 non startup fault mainte" },
  { d: 1, t: "Schematic and boardview" },
  { d: 2, k: "pdf", t: "Reno4 5G 2BD318 sub schemati" },
  { d: 2, k: "pdf", t: "Reno4 5G 2BD318-0 location.pdf" },
  { d: 2, k: "pdf", t: "Reno4 5G 2BD318-0 schematic.p" },
  { d: 2, k: "pcb", t: "Reno4 5G 2BD318.pcb" },
  { d: 0, t: "Reno3 vigor" },
  { d: 1, t: "Schematic and boardview" },
  { d: 2, k: "pcb", t: "Reno3 vigor 2BD282 YiDianTon", on: true },
  { d: 2, k: "pdf", t: "Reno3 vigor 2BD282-0 location." },
  { d: 2, k: "pdf", t: "Reno3 vigor 2BD282-0 schemat" },
  { d: 2, k: "pdf", t: "Reno3 vigor Component comm" },
];

const INDENT = ["pl-[61px]", "pl-[81px]", "pl-[103px]"];

function TreeRow({ row }: { row: Row }) {
  const active = row.d === 2 && row.on;
  return (
    <li>
      <button
        type="button"
        className={`flex h-6 w-full items-center whitespace-nowrap text-left ${row.d === 2 ? "gap-1" : "gap-[6px]"} ${INDENT[row.d]} ${active ? "text-[#5b97fb]" : "text-black"}`}
      >
        {row.d === 2 ? row.k === "pdf" ? <PdfIcon /> : <PcbIcon /> : <BoxMinus />}
        <span>{row.t}</span>
      </button>
    </li>
  );
}

/* ------------------------------------------------------------------ */
/* Category rail                                                       */
/* ------------------------------------------------------------------ */

function RailItem({
  icon,
  label,
  active,
  low,
}: {
  icon: React.ReactNode;
  label: string;
  active?: boolean;
  low?: boolean;
}) {
  return (
    <button
      type="button"
      className={`flex w-full flex-col items-center whitespace-nowrap ${active ? "text-[#3f97fb]" : "text-[#5f6b85]"}`}
    >
      <span className={`flex h-8 items-center justify-center ${low ? "pt-1" : ""}`}>{icon}</span>
      <span className="h-6 leading-6">{label}</span>
    </button>
  );
}

function RailGroup({ title, tone, children }: { title: string; tone: string; children: React.ReactNode }) {
  return (
    <section className={`relative flex h-[226px] w-14 flex-col items-center gap-[14px] rounded-lg border-2 border-dashed pt-[18px] ${tone}`}>
      <h2 className="absolute -top-[11px] bg-white leading-5">{title}</h2>
      {children}
    </section>
  );
}

/* ------------------------------------------------------------------ */
/* Toolbar                                                             */
/* ------------------------------------------------------------------ */

function Tool({ label, on, children }: { label: string; on?: boolean; children: React.ReactNode }) {
  return (
    <button
      type="button"
      aria-label={label}
      className={`flex h-6 w-6 shrink-0 items-center justify-center ${on ? "bg-[#b9d2fd]" : ""}`}
    >
      {children}
    </button>
  );
}

function Sep() {
  return <span className="mx-px h-5 w-px shrink-0 bg-[#c8c8c8]" />;
}

const MENU = ["File(F)", "VIP(V)", "Tool(T)", "Settings(S)", "PCB View settings(S)"];

export default function App() {
  return (
    <div className="flex h-screen flex-col overflow-hidden bg-white font-['Noto_Sans',sans-serif] text-[14px] text-black">
      <header className="flex h-10 shrink-0 items-center bg-linear-to-r from-[#1fa2fc] via-[#2f74ff] via-25% to-[#2b9dff] pr-4 pl-3 text-white">
        <Logo />
        <h1 className="ml-[14px] whitespace-nowrap">XZZ Schematics V4.77 [ VIP Due date: 2025-10-30 17:50:47 ]</h1>
        <div className="ml-auto flex items-center">
          <button type="button" aria-label="Toolbox">
            <svg viewBox="0 0 18 18" className="h-[18px] w-[18px]" fill="none" stroke="#e3e13a" strokeWidth="1.400">
              <rect x="1.500" y="4.500" width="15" height="12" rx="1.500" />
              <path d="M5.500 4.500V3q0-1.500 1.500-1.500h4q1.500 0 1.500 1.500v1.500M1.500 8h15M5 10h8" />
            </svg>
          </button>
          <span className="mx-[10px] h-5 w-px bg-[#6db9ff]" />
          <span className="flex items-center gap-3 pl-px">
            <button type="button" aria-label="Minimize">
              <svg viewBox="0 0 18 18" className="h-[18px] w-[18px]" stroke="#fff" strokeWidth="1.600"><path d="M1 9h16" /></svg>
            </button>
            <button type="button" aria-label="Maximize">
              <svg viewBox="0 0 18 18" className="h-[18px] w-[18px]" fill="none" stroke="#fff" strokeWidth="1.300"><rect x="1.500" y="1.500" width="15" height="15" rx="3.500" /></svg>
            </button>
            <button type="button" aria-label="Close">
              <svg viewBox="0 0 18 18" className="h-[18px] w-[18px]" stroke="#fff" strokeWidth="1.600"><path d="M1.500 1.500l15 15M16.500 1.500l-15 15" /></svg>
            </button>
          </span>
        </div>
      </header>

      <nav className="flex h-8 shrink-0 items-center gap-[18px] border-b border-[#dcdcdc] bg-[#f0f0f0] pt-px pl-[18px]">
        {MENU.map((m) => (
          <button key={m} type="button" className="whitespace-nowrap">{m}</button>
        ))}
      </nav>

      <div className="flex min-h-0 flex-1">
        <aside className="flex w-[431px] shrink-0 flex-col border-r border-[#dcdcdc]">
          <form className="flex h-10 shrink-0 items-center border-b border-[#dcdcdc] pl-[5px]">
            <button type="button" className="flex h-[30px] w-[49px] items-center justify-center rounded border border-[#dcdcdc]">Shrink</button>
            <div className="ml-[10px] flex h-[30px] w-[302px] items-center rounded border border-[#dcdcdc] px-2">
              <input aria-label="Model number" placeholder="Please input the model number or PCB" className="min-w-0 flex-1 bg-transparent outline-none placeholder:text-[#c0c4cc]" />
              <ChevronDown className="-mr-1 h-6 w-6 shrink-0 text-[#a0a4ac]" strokeWidth={1.5} />
            </div>
            <button type="button" aria-label="Search" className="ml-[10px] flex h-[30px] w-[49px] items-center justify-center rounded-[3px] bg-[#4c92fc] text-white">
              <svg viewBox="0 0 20 20" className="h-5 w-5" fill="none" stroke="#fff" strokeWidth="1.500"><circle cx="10" cy="10" r="8.500" /><path d="M15.500 16l3 2.500" /></svg>
            </button>
          </form>

          <div className="flex min-h-0 flex-1">
            <div className="flex w-[74px] shrink-0 flex-col items-center pt-[10px]">
              <RailGroup title="VIP" tone="border-[#3f9bfb] text-[#3f97fb]">
                <RailItem icon={<CourseIcon />} label="Cour..." />
                <RailItem icon={<PhoneIcon />} label="Phone" active />
                <RailItem icon={<LaptopIcon />} label="Com..." />
              </RailGroup>
              <div className="h-[34px] shrink-0" />
              <RailGroup title="Custom" tone="border-[#5f6b85] text-[#5f6b85]">
                <RailItem icon={<DroneIcon />} label="Drone" low />
                <RailItem icon={<GameIcon />} label="Gam..." low />
                <RailItem icon={<CarIcon />} label="Car" low />
              </RailGroup>
              <div className="h-5 shrink-0" />
              <RailItem icon={<StarIcon />} label="Favorites" />
            </div>

            <div className="flex min-w-0 flex-1 overflow-hidden bg-[#f8f8f8] bg-[linear-gradient(to_right,#d9e2f2,#f0f3f8_14px,#f8f8f8_32px)]">
              <div className="min-w-0 flex-1 overflow-hidden">
                <ul className="-mt-[10px]">
                  {ROWS.map((r, i) => (
                    <TreeRow key={i} row={r} />
                  ))}
                </ul>
              </div>
              <div className="ml-px w-[10px] shrink-0">
                <div className="h-[84%] rounded-b-[5px] bg-[#686868]" />
              </div>
              <div className="ml-px flex w-3 shrink-0 flex-col items-center bg-[#f0f0f0]">
                <ChevronUp className="h-4 w-4 shrink-0 text-[#444]" strokeWidth={1.5} />
                <div className="basis-[533px]" />
                <div className="h-[50px] w-[10px] shrink-0 rounded-full bg-[#686868]" />
              </div>
            </div>
          </div>
        </aside>

        <div className="relative w-[9px] shrink-0 bg-[#f9fdf8]">
          <button type="button" aria-label="Collapse list" className="absolute top-[44%] left-0 h-28 w-[9px]">
            <svg viewBox="0 0 9 112" className="absolute inset-0 h-28 w-[9px]" aria-hidden="true">
              <path d="M0 0L9 14v84L0 112z" fill="#d6eaff" />
            </svg>
            <ChevronLeft className="absolute top-[50px] -left-px h-3 w-3 text-[#58a8f0]" strokeWidth={2} />
          </button>
        </div>

        <main className="flex min-w-0 flex-1 flex-col border-l border-[#dcdcdc]">
          <div className="flex h-[34px] shrink-0 items-center gap-[5px] border-b border-[#dcdcdc] bg-[#fafafa] pr-[10px] pl-2">
            <button type="button" className="flex h-6 w-[139px] items-center justify-center gap-1 rounded-[3px] border border-[#707070] text-[#7f7f7f]">
              <svg viewBox="0 0 18 18" className="h-[18px] w-[18px]" fill="none" stroke="#111" strokeWidth="1.600" aria-hidden="true">
                <path d="M1 9.500L9 1.500l8 8M3.500 8v9h11V8M7 17v-5.500h4V17" />
              </svg>
              <span className="whitespace-nowrap">Member Center</span>
            </button>
            <button type="button" className="flex h-6 w-[288px] items-center justify-center rounded-[3px] border border-black bg-white text-[15px] font-bold whitespace-nowrap">
              Reno3 vigor 2BD282 YiDianTong.pcb
            </button>
            <button type="button" aria-label="Close all tabs" className="ml-auto">
              <svg viewBox="0 0 18 18" className="h-[18px] w-[18px]" aria-hidden="true">
                <path d="M1 15V2.500Q1 1 2.500 1H16" fill="none" stroke="#777" strokeWidth="2" />
                <rect x="4" y="4" width="14" height="14" rx="2" fill="#777" />
                <path d="M8 8l6 6M14 8l-6 6" stroke="#fff" strokeWidth="1.600" />
              </svg>
            </button>
          </div>

          <div className="flex min-h-0 flex-1">
            <div className="flex min-w-0 flex-1 flex-col">
              <div className="flex h-[26px] shrink-0 items-center gap-[2px] bg-[#f9f9f9] px-[5px]">
                <Tool label="Split view"><SplitIcon /></Tool>
                <Sep />
                <Tool label="Zoom in"><ZoomIn className="h-5 w-5" strokeWidth={2.2} /></Tool>
                <Tool label="Zoom out"><ZoomOut className="h-5 w-5 text-[#333]" strokeWidth={1.7} /></Tool>
                <Sep />
                <Tool label="Fit"><FitIcon /></Tool>
                <Sep />
                <Tool label="Rotate left"><RotateIcon /></Tool>
                <Tool label="Rotate right"><RotateIcon flip /></Tool>
                <Sep />
                <Tool label="Paint"><RollerIcon /></Tool>
                <Sep />
                <Tool label="Mirror"><FlipIcon /></Tool>
                <Tool label="Highlight" on><LampIcon /></Tool>
                <Tool label="3D view">3D</Tool>
                <Tool label="Diode" on><DiodeIcon /></Tool>
                <Tool label="Net" on><NetIcon /></Tool>
                <Tool label="Curve"><ArcIcon /></Tool>
                <Sep />
                <Tool label="Mouse"><MouseIcon /></Tool>
                <Sep />
                <div className="flex h-5 w-[230px] shrink-0 items-center rounded-[3px] border border-[#dcdcdc] bg-white px-[2px] text-[12px]">
                  <input aria-label="Component or net name" placeholder="Enter the component or net name" className="min-w-0 flex-1 bg-transparent outline-none placeholder:text-[#c0c4cc]" />
                  <ChevronDown className="-mr-[2px] h-6 w-6 shrink-0 text-[#a0a4ac]" strokeWidth={1.5} />
                </div>
                <Tool label="Search"><Search className="h-5 w-5 text-[#222]" strokeWidth={1.8} /></Tool>
                <Sep />
                <button type="button" className="ml-[2px] flex h-[22px] w-[109px] shrink-0 items-center justify-center border border-[#ff0000] bg-white">[ColorScheme]</button>
                <Sep />
                <Tool label="Show"><EyeIcon /></Tool>
                <button type="button" aria-label="Side panel" className="ml-auto">
                  <svg viewBox="0 0 22 18" className="h-[18px] w-[22px]" fill="none" stroke="#666" aria-hidden="true">
                    <rect x="1" y="1" width="20" height="16" strokeWidth="1.800" />
                    <path d="M7 1v16" strokeWidth="1.500" />
                    <path d="M11 5.500h7M11 9h7M11 12.500h7" strokeWidth="1.500" />
                  </svg>
                </button>
              </div>
              <div className="min-h-0 flex-1 overflow-hidden bg-white">
                <BoardView />
              </div>
            </div>
            <div className="relative w-[10px] shrink-0 border-l border-[#dcdcdc] bg-[#fafafa]">
              <button type="button" aria-label="Open side panel" className="absolute top-[44%] right-0 h-28 w-[9px]">
                <svg viewBox="0 0 9 112" className="absolute inset-0 h-28 w-[9px]" aria-hidden="true">
                  <path d="M9 0L0 14v84l9 14z" fill="#d6eaff" stroke="#9ccdf8" strokeWidth=".6" />
                </svg>
                <ChevronLeft className="absolute top-[50px] -left-px h-3 w-3 text-[#58a8f0]" strokeWidth={2} />
              </button>
            </div>
          </div>
        </main>
      </div>

      <footer className="flex h-5 shrink-0 items-center justify-center bg-[#0390dd] font-['Liberation_Mono',monospace] text-[15px] text-white">
        XZZ Schematics https://www.xzztools.com
      </footer>
    </div>
  );
}
